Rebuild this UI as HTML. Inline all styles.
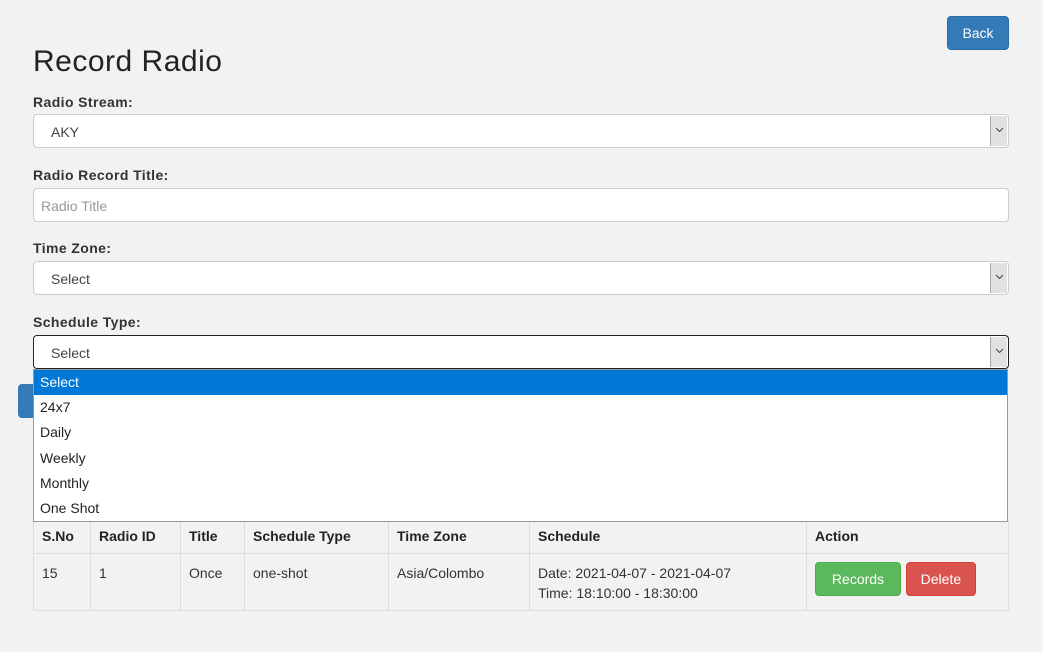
<!DOCTYPE html>
<html><head><meta charset="utf-8"><style>
*{box-sizing:border-box;margin:0;padding:0}
body{width:1043px;height:652px;background:#f2f2f2;font-family:"Liberation Sans",sans-serif;color:#333;position:relative;overflow:hidden}
.btn{position:absolute;color:#fff;font-size:14px;border-radius:4px;text-align:center}
h1{position:absolute;left:33px;top:45px;font-size:30px;font-weight:400;color:#222;letter-spacing:0.5px}
.lbl{position:absolute;left:33px;font-size:14px;font-weight:bold;color:#333;letter-spacing:0.4px}
.sel{position:absolute;left:33px;width:976px;height:34px;background:#fff;border:1px solid #ccc;border-radius:4px;font-size:14px;color:#444;padding:9px 0 0 17px}
.arr{position:absolute;right:1px;top:1px;width:17px;height:30px;background:#e1e1e1;border-left:1px solid #aaa}
.arr svg{position:absolute;left:4px;top:11px}
.dd{position:absolute;left:33px;top:369px;width:975px;height:153px;background:#fff;border:1px solid #999;font-size:14px;color:#222}
.dd div{height:25.2px;padding:4px 0 0 6px}
table{position:absolute;left:33px;top:521px;width:976px;border-collapse:collapse;font-size:14px;color:#333}
td,th{border:1px solid #ddd;text-align:left;vertical-align:top;padding:0 8px}
th{height:32px;padding-top:6px;font-weight:bold;color:#222}
td{height:57px;padding-top:9px;line-height:20px}
</style></head><body>
<div class="btn" style="left:947px;top:16px;width:62px;height:34px;background:#337ab7;border:1px solid #2e6da4;padding-top:8px">Back</div>
<h1>Record Radio</h1>
<div class="lbl" style="top:94px">Radio Stream:</div>
<div class="sel" style="top:114px">AKY<div class="arr"><svg width="9" height="6"><path d="M1 1L4.5 4.5L8 1" stroke="#444" fill="none"/></svg></div></div>
<div class="lbl" style="top:167px">Radio Record Title:</div>
<div class="sel" style="top:188px;padding-left:7px;color:#999">Radio Title</div>
<div class="lbl" style="top:240px">Time Zone:</div>
<div class="sel" style="top:261px">Select<div class="arr"><svg width="9" height="6"><path d="M1 1L4.5 4.5L8 1" stroke="#444" fill="none"/></svg></div></div>
<div class="lbl" style="top:314px">Schedule Type:</div>
<div class="btn" style="left:18px;top:384px;width:40px;height:34px;background:#337ab7"></div>
<div class="sel" style="top:335px;border-color:#222">Select<div class="arr"><svg width="9" height="6"><path d="M1 1L4.5 4.5L8 1" stroke="#444" fill="none"/></svg></div></div>
<table>
<tr><th style="width:57px">S.No</th><th style="width:90px">Radio ID</th><th style="width:64px">Title</th><th style="width:144px">Schedule Type</th><th style="width:141px">Time Zone</th><th style="width:277px">Schedule</th><th>Action</th></tr>
<tr><td>15</td><td>1</td><td>Once</td><td>one-shot</td><td>Asia/Colombo</td><td>Date: 2021-04-07 - 2021-04-07<br>Time: 18:10:00 - 18:30:00</td><td style="padding-top:8px"><span class="btn" style="position:relative;display:inline-block;width:86px;height:34px;background:#5cb85c;border:1px solid #4cae4c;padding-top:7px;line-height:18px">Records</span> <span class="btn" style="position:relative;display:inline-block;width:70px;height:34px;background:#d9534f;border:1px solid #d43f3a;padding-top:7px;line-height:18px;margin-left:1px">Delete</span></td></tr>
</table>
<div class="dd">
<div style="background:#0078d7;color:#fff">Select</div>
<div>24x7</div><div>Daily</div><div>Weekly</div><div>Monthly</div><div>One Shot</div>
</div>
</body></html>
